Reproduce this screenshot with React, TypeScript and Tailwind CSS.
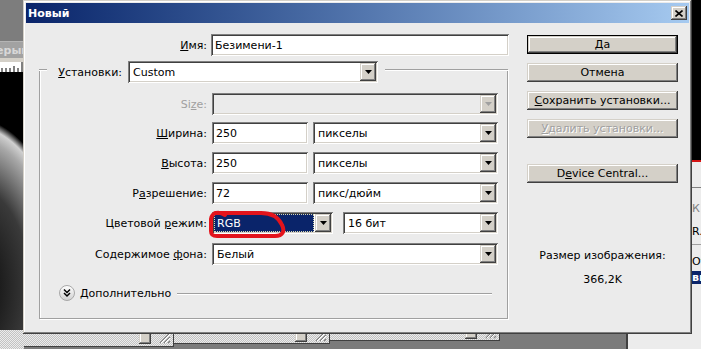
import React from 'react';

const sunken =
  'shadow-[inset_1px_1px_0_#808080,inset_-1px_-1px_0_#ffffff,inset_2px_2px_0_#404040,inset_-2px_-2px_0_#d4d0c8]';
const raised =
  'bg-[#d4d0c8] shadow-[inset_-1px_-1px_0_#404040,inset_1px_1px_0_#d4d0c8,inset_-2px_-2px_0_#808080,inset_2px_2px_0_#ffffff]';
const dither = 'bg-[repeating-conic-gradient(#c2c2c2_0%_25%,#ececec_0%_50%)] bg-[length:2px_2px]';

const Arrow: React.FC<{ disabled?: boolean }> = ({ disabled }) => (
  <div className={`mr-[2px] flex h-[18px] w-[16px] shrink-0 items-center justify-center ${raised}`}>
    <svg width="7" height="4" viewBox="0 0 7 4">
      <path d="M0 0h7L3.5 4z" fill={disabled ? '#a0a0a0' : '#000'} />
    </svg>
  </div>
);

const Select: React.FC<{ className?: string; value?: string; disabled?: boolean; selected?: boolean }> = ({
  className = '',
  value = '',
  disabled,
  selected,
}) => (
  <div className={`flex h-[22px] items-center ${disabled ? 'bg-[#ebebeb]' : 'bg-white'} ${sunken} ${className}`}>
    {selected ? (
      <div className="ml-[2px] mr-[1px] flex h-[18px] flex-1 items-center border border-dotted border-[#d8d8b0] bg-[#0a246a] pl-[2px] text-white">
        {value}
      </div>
    ) : (
      <div className="flex-1 truncate pl-[5px]">{value}</div>
    )}
    <Arrow disabled={disabled} />
  </div>
);

const Field: React.FC<{ className?: string; value: string }> = ({ className = '', value }) => (
  <div className={`flex h-[22px] items-center bg-white pl-[4px] ${sunken} ${className}`}>{value}</div>
);

const Btn: React.FC<{ children: React.ReactNode; def?: boolean; disabled?: boolean; className?: string }> = ({
  children,
  def,
  disabled,
  className = '',
}) => (
  <div className={`h-[19px] w-[151px] ${def ? 'border border-black' : ''} ${className}`}>
    <div
      className={`flex h-full items-center justify-center ${raised} ${
        disabled ? 'text-[#a0a0a0] [text-shadow:1px_1px_0_#ffffff]' : ''
      }`}
    >
      {children}
    </div>
  </div>
);

const Row: React.FC<{ label: React.ReactNode; className?: string; dim?: boolean; children: React.ReactNode }> = ({
  label,
  className = '',
  dim,
  children,
}) => (
  <div className={`flex items-center ${className}`}>
    <div className={`w-[167px] text-right ${dim ? 'text-[#a0a0a0]' : ''}`}>{label}</div>
    <div className="ml-[5px] flex">{children}</div>
  </div>
);

const Grip: React.FC = () => (
  <div className="flex items-end gap-[8px]">
    <div className={`h-[12px] w-[12px] ${raised}`} />
    <svg width="12" height="12" viewBox="0 0 12 12">
      <path d="M11 1L1 11M11 5L5 11M11 9L9 11" stroke="#808080" strokeWidth="1.2" />
      <path d="M11 2L2 11M11 6L6 11" stroke="#fff" strokeWidth="1" />
    </svg>
  </div>
);

export default function App() {
  return (
    <div className="relative h-[349px] w-[701px] overflow-hidden bg-[#7b7b7b] font-['DejaVu_Sans',sans-serif] text-[11px] leading-[13px] text-black">
      {/* document window on the left */}
      <div className="absolute left-0 top-0 flex h-[349px] w-[24px] flex-col overflow-hidden">
        <div className="h-[41px] bg-[#7d7d7d]" />
        <div className="h-[1px] bg-[#b4b4b4]" />
        <div className="flex h-[16px] items-center overflow-hidden bg-[#a2a2a2]">
          <span className="-ml-[12px] font-bold text-[#d8d8d8]">Серый</span>
        </div>
        <div className="h-[4px] bg-[#d4d0c8]" />
        <div className="h-[10px] bg-white">
          <svg width="24" height="10" viewBox="0 0 24 10">
            <path d="M2 6v4M6 6v4M10 6v4M14 4v6M18 6v4M22 0v10" stroke="#000" strokeWidth="1" />
          </svg>
        </div>
        <div className="h-[258px] bg-[radial-gradient(ellipse_100px_170px_at_-30px_215px,#000_0%,#3a3a3a_60%,#a8a8a8_88%,#d0d0d0_95%,#000_100%)]" />
        <div className={`flex-1 ${dither}`} />
      </div>

      {/* windows under the dialog */}
      <div className={`absolute left-[24px] top-[326px] flex h-[21px] w-[150px] items-end justify-end border-b border-r border-[#404040] pb-[2px] pr-[2px] ${dither}`}>
        <Grip />
      </div>
      <div className={`absolute left-[174px] top-[326px] flex h-[18px] w-[156px] items-end justify-end border-b border-r border-[#404040] pb-[1px] pr-[2px] ${dither}`}>
        <Grip />
      </div>
      <div className={`absolute left-[330px] top-[326px] flex h-[15px] w-[170px] items-end justify-end border-b border-r border-[#404040] pb-[1px] pr-[2px] ${dither}`}>
        <Grip />
      </div>
      <div className="absolute left-[626px] top-[326px] h-[23px] w-[75px] border-l-2 border-[#404040] bg-[#ececec]" />

      {/* strip on the right */}
      <div className="absolute left-[692px] top-0 flex h-[334px] w-[9px] flex-col overflow-hidden">
        <div className="h-[160px] bg-black" />
        <div className="h-[2px] bg-[#d41414]" />
        <div className="flex flex-1 flex-col bg-[#ececec]">
          <div className="mt-[25px] h-[1px] bg-[#808080]" />
          <div className="mt-[14px] text-[#808080]">К</div>
          <div className="mt-[10px]">R.</div>
          <div className="mt-[6px] h-[1px] bg-[#a0a0a0]" />
          <div className="mt-[10px]">От</div>
          <div className="mt-[3px] h-[13px] bg-[#0a246a] font-bold text-white">вь</div>
        </div>
      </div>

      {/* dialog */}
      <div className="absolute left-[23px] top-0 h-[334px] w-[669px] bg-[#ebebeb] p-[3px] shadow-[inset_-1px_-1px_0_#404040,inset_1px_1px_0_#d4d0c8,inset_-2px_-2px_0_#808080,inset_2px_2px_0_#ffffff]">
        <div className="flex h-[20px] items-center bg-gradient-to-r from-[#0a246a] to-[#a6caf0] pl-[2px]">
          <span className="font-bold text-white">Новый</span>
          <div className={`ml-auto mr-[2px] flex h-[14px] w-[16px] items-center justify-center ${raised}`}>
            <svg width="8" height="7" viewBox="0 0 8 7">
              <path d="M0.5 0.5L7.5 6.5M7.5 0.5L0.5 6.5" stroke="#000" strokeWidth="1.6" />
            </svg>
          </div>
        </div>

        <div className="flex">
          <div className="w-[483px] pt-[11px]">
            <div className="flex items-center">
              <div className="w-[181px] text-right">
                <span className="underline">И</span>мя:
              </div>
              <Field className="ml-[4px] w-[298px]" value="Безимени-1" />
            </div>

            <div className="ml-[13px] mt-[5px] w-[469px]">
              <div className="relative z-10 flex h-[22px]">
                <div className="mt-[8px] h-0 w-[8px] border-t border-[#a0a0a0] shadow-[0_1px_0_#ffffff]" />
                <div className="w-[75px] self-center text-right">
                  <span className="underline">У</span>становки:
                </div>
                <Select className="ml-[6px] w-[250px]" value="Custom" />
                <div className="ml-[7px] mt-[8px] h-0 flex-1 border-t border-[#a0a0a0] shadow-[0_1px_0_#ffffff]" />
              </div>
              <div className="-mt-[14px] h-[250px] border-x border-b border-[#a0a0a0] pt-[24px] shadow-[1px_1px_0_#ffffff,inset_1px_0_0_#ffffff]">
                <Row
                  dim
                  label={
                    <>
                      Si<span className="underline">z</span>e:
                    </>
                  }
                >
                  <Select className="w-[286px]" disabled />
                </Row>
                <Row
                  className="mt-[7px]"
                  label={
                    <>
                      <span className="underline">Ш</span>ирина:
                    </>
                  }
                >
                  <Field className="w-[96px]" value="250" />
                  <Select className="ml-[5px] w-[185px]" value="пикселы" />
                </Row>
                <Row
                  className="mt-[8px]"
                  label={
                    <>
                      <span className="underline">В</span>ысота:
                    </>
                  }
                >
                  <Field className="w-[96px]" value="250" />
                  <Select className="ml-[5px] w-[185px]" value="пикселы" />
                </Row>
                <Row
                  className="mt-[8px]"
                  label={
                    <>
                      Р<span className="underline">а</span>зрешение:
                    </>
                  }
                >
                  <Field className="w-[96px]" value="72" />
                  <Select className="ml-[5px] w-[185px]" value="пикс/дюйм" />
                </Row>
                <Row
                  className="mt-[8px]"
                  label={
                    <>
                      Цветовой <span className="underline">р</span>ежим:
                    </>
                  }
                >
                  <Select className="w-[121px]" value="RGB" selected />
                  <Select className="ml-[10px] w-[155px]" value="16 бит" />
                </Row>
                <Row
                  className="mt-[9px]"
                  label={
                    <>
                      Содержимое <span className="underline">ф</span>она:
                    </>
                  }
                >
                  <Select className="w-[286px]" value="Белый" />
                </Row>

                <div className="mt-[20px] flex h-[16px] items-center">
                  <svg className="ml-[19px]" width="16" height="16" viewBox="0 0 16 16">
                    <defs>
                      <linearGradient id="adv" x1="0" y1="0" x2="0" y2="1">
                        <stop offset="0" stopColor="#ffffff" />
                        <stop offset="1" stopColor="#d0d0d0" />
                      </linearGradient>
                    </defs>
                    <circle cx="8" cy="8" r="7.5" fill="url(#adv)" stroke="#a8a8a8" />
                    <path d="M5 4.5l3 3 3-3M5 8l3 3 3-3" fill="none" stroke="#000" strokeWidth="1.5" />
                  </svg>
                  <span className="ml-[5px]">Дополнительно</span>
                  <div className="ml-[6px] mr-[15px] h-0 flex-1 border-t border-[#a0a0a0] shadow-[0_1px_0_#ffffff]" />
                </div>
              </div>
            </div>
          </div>

          <div className="ml-[18px] flex w-[151px] flex-col pt-[12px]">
            <Btn def>Да</Btn>
            <Btn className="mt-[9px]">Отмена</Btn>
            <Btn className="mt-[9px]">
              <span>
                <span className="underline">С</span>охранить установки...
              </span>
            </Btn>
            <Btn className="mt-[9px]" disabled>
              <span>
                <span className="underline">У</span>далить установки...
              </span>
            </Btn>
            <Btn className="mt-[26px]">
              <span>
                D<span className="underline">e</span>vice Central...
              </span>
            </Btn>
            <div className="mt-[66px] text-center">Размер изображения:</div>
            <div className="mt-[11px] text-center">366,2K</div>
          </div>
        </div>
      </div>

      {/* red hand-drawn mark around the colour mode */}
      <svg className="pointer-events-none absolute left-[205px] top-[205px]" width="85" height="36" viewBox="0 0 85 36">
        <path
          d="M20 10C14 6 7 7 6 14L6 26C6 30 8 31 12 31L70 31C78 31 80 26 77 20C73 11 66 8 56 8L10 8"
          fill="none"
          stroke="#e3141c"
          strokeWidth="4"
          strokeLinecap="round"
          strokeLinejoin="round"
        />
      </svg>
    </div>
  );
}
